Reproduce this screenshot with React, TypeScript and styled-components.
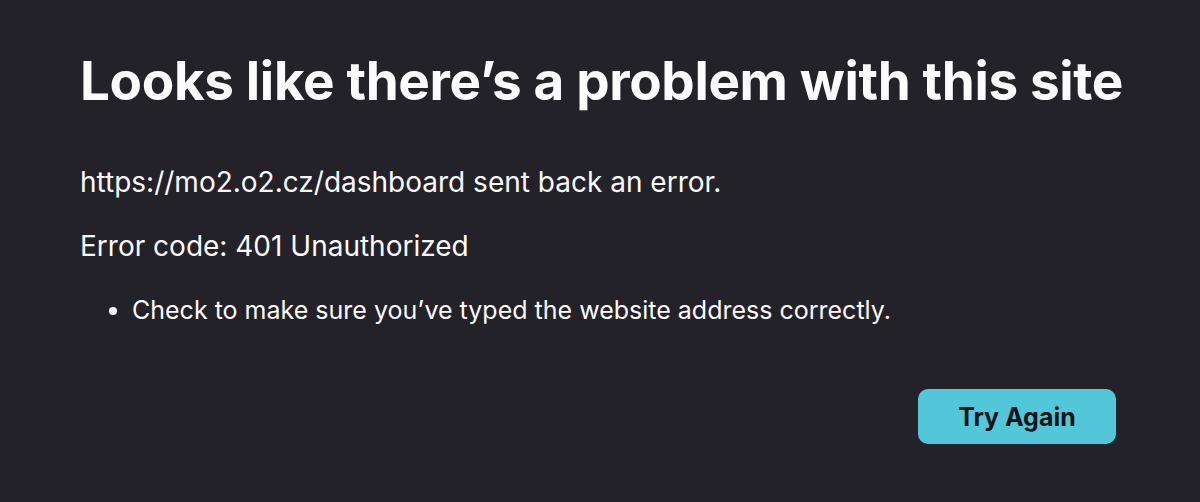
import styled, { createGlobalStyle } from "styled-components";

const GlobalStyle = createGlobalStyle`
  html, body {
    margin: 0;
    padding: 0;
    background: #232228;
  }
  body {
    font-family: Inter, "Noto Sans", "Liberation Sans", sans-serif;
    color: #fbfbfe;
  }
`;

const Page = styled.main`
  width: 1200px;
  height: 502px;
  box-sizing: border-box;
  padding: 43px 84px 0 80px;
`;

const Title = styled.h1`
  margin: 0 0 43px;
  font-size: 53px;
  font-weight: 700;
  line-height: 76px;
  letter-spacing: -0.35px;
  white-space: nowrap;
`;

const Text = styled.p`
  margin: 0 0 24px;
  font-size: 28px;
  line-height: 40px;
`;

const List = styled.ul`
  margin: 10px 0 0;
  padding-left: 52px;
  font-size: 25px;
  line-height: 40px;
`;

const Actions = styled.div`
  display: flex;
  justify-content: flex-end;
  margin-top: 59px;
`;

const Button = styled.button`
  width: 198px;
  height: 55px;
  border: none;
  border-radius: 10px;
  background: #52c7d9;
  color: #15141a;
  font-family: inherit;
  font-size: 25px;
  font-weight: 700;
  cursor: pointer;
`;

export default function App() {
  return (
    <>
      <GlobalStyle />
      <Page>
        <Title>Looks like there’s a problem with this site</Title>
        <Text>https://mo2.o2.cz/dashboard sent back an error.</Text>
        <Text>Error code: 401 Unauthorized</Text>
        <List>
          <li>Check to make sure you’ve typed the website address correctly.</li>
        </List>
        <Actions>
          <Button>Try Again</Button>
        </Actions>
      </Page>
    </>
  );
}
